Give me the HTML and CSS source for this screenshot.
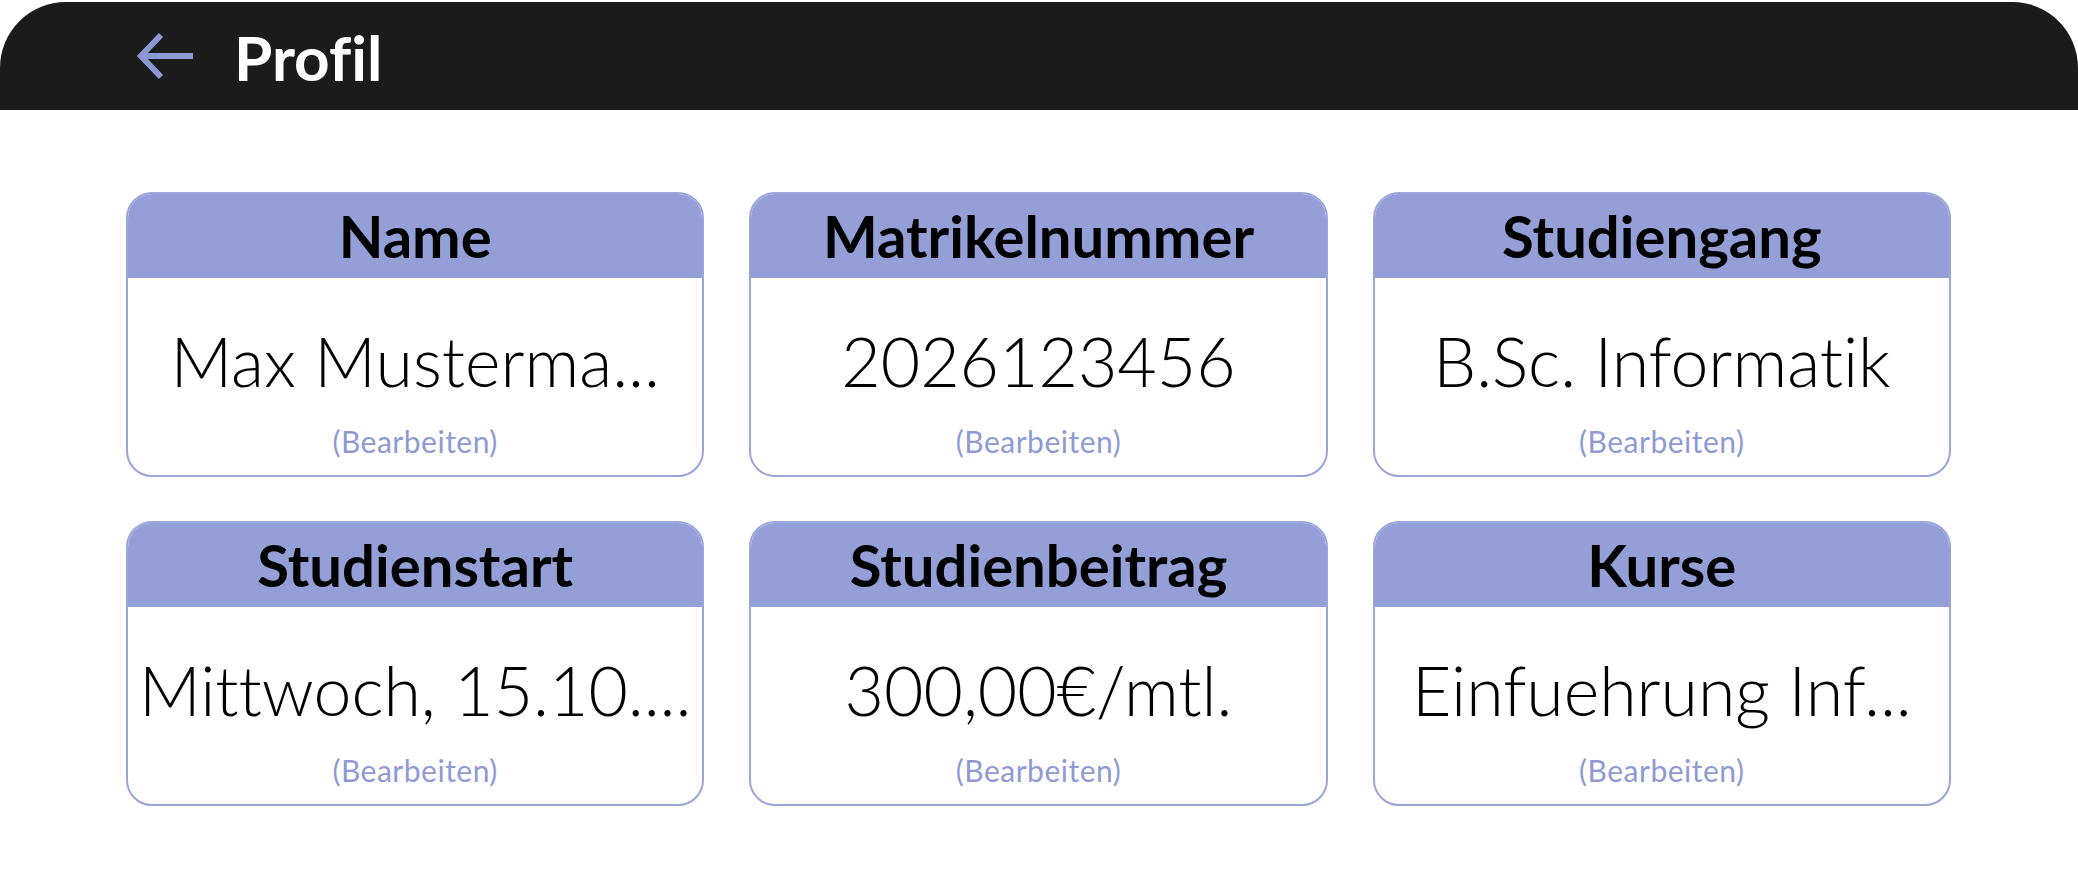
FILE: index.html
```html
<!DOCTYPE html>
<html lang="de">
<head>
    <meta charset="UTF-8">
    <title>Profil</title>
    <link rel="stylesheet" href="styles.css">
</head>
<body>

<div class="topbar">
    <svg class="back" viewBox="0 0 58 48" width="58" height="48">
        <path d="M57 24 H5 M25 3 L5 24 L25 45" fill="none" stroke="#8c97d6" stroke-width="6"/>
    </svg>
    <span class="title">Profil</span>
</div>

<div class="grid">
    <div class="card">
        <div class="card-head">Name</div>
        <div class="card-value">Max Musterma...</div>
        <div class="card-edit">(Bearbeiten)</div>
    </div>
    <div class="card">
        <div class="card-head">Matrikelnummer</div>
        <div class="card-value">2026123456</div>
        <div class="card-edit">(Bearbeiten)</div>
    </div>
    <div class="card">
        <div class="card-head">Studiengang</div>
        <div class="card-value">B.Sc. Informatik</div>
        <div class="card-edit">(Bearbeiten)</div>
    </div>
    <div class="card">
        <div class="card-head">Studienstart</div>
        <div class="card-value">Mittwoch, 15.10....</div>
        <div class="card-edit">(Bearbeiten)</div>
    </div>
    <div class="card">
        <div class="card-head">Studienbeitrag</div>
        <div class="card-value">300,00€/mtl.</div>
        <div class="card-edit">(Bearbeiten)</div>
    </div>
    <div class="card">
        <div class="card-head">Kurse</div>
        <div class="card-value">Einfuehrung Inf...</div>
        <div class="card-edit">(Bearbeiten)</div>
    </div>
</div>

</body>
</html>
```

FILE: styles.css
```css
body {
    margin: 0;
    font-family: Lato, "Open Sans", sans-serif;
    font-variant-ligatures: none;
    background: #fff;
    color: #000;
}
.topbar {
    margin-top: 2px;
    height: 108px;
    background: #1b1b1b;
    border-radius: 66px 66px 0 0;
    display: flex;
    align-items: center;
    padding-left: 136px;
    gap: 40px;
}
.back {
    display: block;
}
.title {
    color: #fff;
    font-weight: 700;
    font-size: 62px;
    line-height: 64px;
    margin-top: 2px;
}
.grid {
    display: grid;
    grid-template-columns: repeat(3, 1fr);
    column-gap: 45px;
    row-gap: 44px;
    padding: 82px 127px 0 126px;
}
.card {
    border: 2px solid #9aa5dc;
    border-radius: 26px;
    overflow: hidden;
    box-sizing: border-box;
    height: 285px;
    text-align: center;
}
.card-head {
    background: #939fd6;
    height: 84px;
    line-height: 84px;
    font-size: 58px;
    font-weight: 700;
}
.card-value {
    margin-top: 43px;
    padding: 0 4px;
    font-size: 68px;
    font-weight: 300;
    line-height: 80px;
    white-space: nowrap;
    overflow: hidden;
}
.card-edit {
    margin-top: 24px;
    font-size: 30px;
    line-height: 32px;
    letter-spacing: 0.5px;
    color: #8f9ad5;
}
```
